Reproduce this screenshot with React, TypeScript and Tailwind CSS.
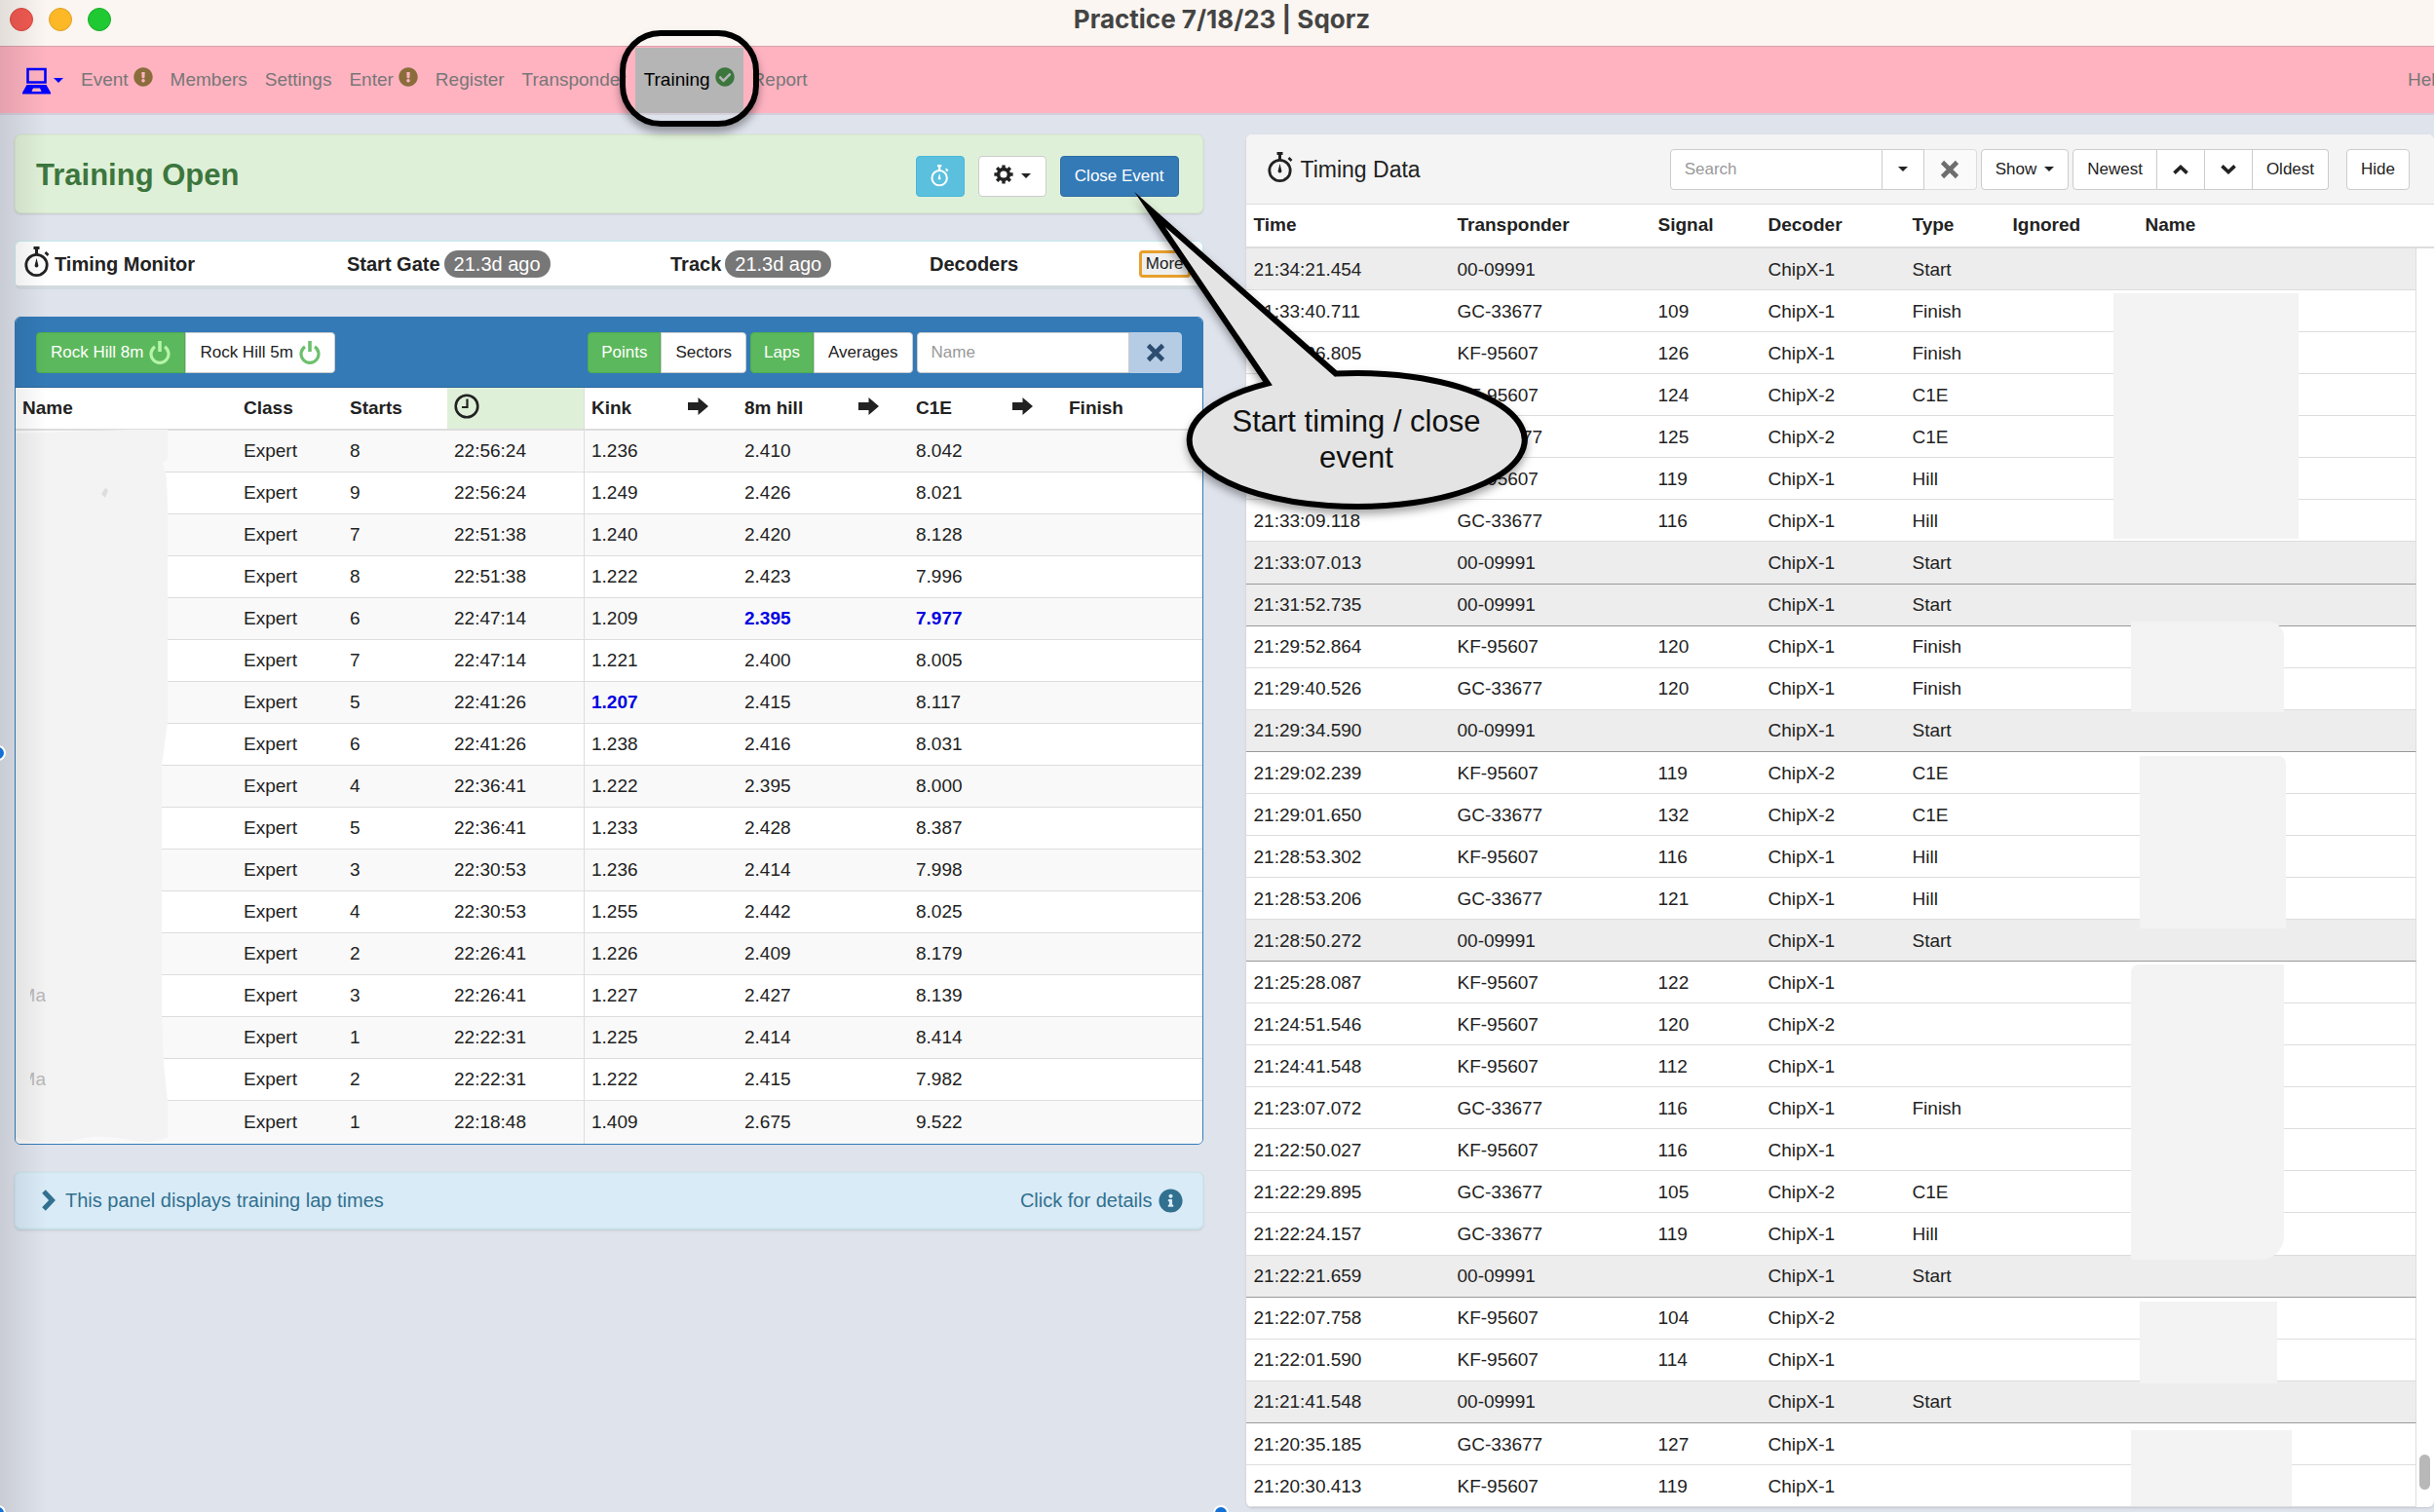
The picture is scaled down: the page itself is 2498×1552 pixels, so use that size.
import { ReactNode, useState } from "react";
import { FaCheckCircle, FaExclamationCircle, FaInfoCircle } from "react-icons/fa";
import clsx from "clsx";

interface Lap {
    name?: string;
    starts: number;
    clock: string;
    kink: string;
    hill: string;
    c1e: string;
    best?: string[];
}

const laps: Lap[] = [
    { starts: 8, clock: "22:56:24", kink: "1.236", hill: "2.410", c1e: "8.042" },
    { starts: 9, clock: "22:56:24", kink: "1.249", hill: "2.426", c1e: "8.021" },
    { starts: 7, clock: "22:51:38", kink: "1.240", hill: "2.420", c1e: "8.128" },
    { starts: 8, clock: "22:51:38", kink: "1.222", hill: "2.423", c1e: "7.996" },
    { starts: 6, clock: "22:47:14", kink: "1.209", hill: "2.395", c1e: "7.977", best: ["hill", "c1e"] },
    { starts: 7, clock: "22:47:14", kink: "1.221", hill: "2.400", c1e: "8.005" },
    { starts: 5, clock: "22:41:26", kink: "1.207", hill: "2.415", c1e: "8.117", best: ["kink"] },
    { starts: 6, clock: "22:41:26", kink: "1.238", hill: "2.416", c1e: "8.031" },
    { starts: 4, clock: "22:36:41", kink: "1.222", hill: "2.395", c1e: "8.000" },
    { starts: 5, clock: "22:36:41", kink: "1.233", hill: "2.428", c1e: "8.387" },
    { starts: 3, clock: "22:30:53", kink: "1.236", hill: "2.414", c1e: "7.998" },
    { starts: 4, clock: "22:30:53", kink: "1.255", hill: "2.442", c1e: "8.025" },
    { starts: 2, clock: "22:26:41", kink: "1.226", hill: "2.409", c1e: "8.179" },
    { name: "Ma", starts: 3, clock: "22:26:41", kink: "1.227", hill: "2.427", c1e: "8.139" },
    { starts: 1, clock: "22:22:31", kink: "1.225", hill: "2.414", c1e: "8.414" },
    { name: "Ma", starts: 2, clock: "22:22:31", kink: "1.222", hill: "2.415", c1e: "7.982" },
    { starts: 1, clock: "22:18:48", kink: "1.409", hill: "2.675", c1e: "9.522" },
];

// time, transponder, signal, decoder, type
const hits = [
    ["21:34:21.454", "00-09991", "", "ChipX-1", "Start"],
    ["21:33:40.711", "GC-33677", "109", "ChipX-1", "Finish"],
    ["21:33:36.805", "KF-95607", "126", "ChipX-1", "Finish"],
    ["21:33:19.412", "KF-95607", "124", "ChipX-2", "C1E"],
    ["21:33:18.377", "GC-33677", "125", "ChipX-2", "C1E"],
    ["21:33:10.204", "KF-95607", "119", "ChipX-1", "Hill"],
    ["21:33:09.118", "GC-33677", "116", "ChipX-1", "Hill"],
    ["21:33:07.013", "00-09991", "", "ChipX-1", "Start"],
    ["21:31:52.735", "00-09991", "", "ChipX-1", "Start"],
    ["21:29:52.864", "KF-95607", "120", "ChipX-1", "Finish"],
    ["21:29:40.526", "GC-33677", "120", "ChipX-1", "Finish"],
    ["21:29:34.590", "00-09991", "", "ChipX-1", "Start"],
    ["21:29:02.239", "KF-95607", "119", "ChipX-2", "C1E"],
    ["21:29:01.650", "GC-33677", "132", "ChipX-2", "C1E"],
    ["21:28:53.302", "KF-95607", "116", "ChipX-1", "Hill"],
    ["21:28:53.206", "GC-33677", "121", "ChipX-1", "Hill"],
    ["21:28:50.272", "00-09991", "", "ChipX-1", "Start"],
    ["21:25:28.087", "KF-95607", "122", "ChipX-1", ""],
    ["21:24:51.546", "KF-95607", "120", "ChipX-2", ""],
    ["21:24:41.548", "KF-95607", "112", "ChipX-1", ""],
    ["21:23:07.072", "GC-33677", "116", "ChipX-1", "Finish"],
    ["21:22:50.027", "KF-95607", "116", "ChipX-1", ""],
    ["21:22:29.895", "GC-33677", "105", "ChipX-2", "C1E"],
    ["21:22:24.157", "GC-33677", "119", "ChipX-1", "Hill"],
    ["21:22:21.659", "00-09991", "", "ChipX-1", "Start"],
    ["21:22:07.758", "KF-95607", "104", "ChipX-2", ""],
    ["21:22:01.590", "KF-95607", "114", "ChipX-1", ""],
    ["21:21:41.548", "00-09991", "", "ChipX-1", "Start"],
    ["21:20:35.185", "GC-33677", "127", "ChipX-1", ""],
    ["21:20:30.413", "KF-95607", "119", "ChipX-1", ""],
];

function Stopwatch({ className }: { className?: string }) {
    return (
        <svg viewBox="0 0 26 32" className={className} fill="none" stroke="currentColor" aria-hidden="true">
            <circle cx="12.5" cy="19" r="10.7" strokeWidth="2.8" />
            <path d="M9.5 1.6h6M12.5 2v6" strokeWidth="3" />
            <path d="M21.5 6l3 3" strokeWidth="2.6" />
            <path d="M12.5 12l1.8 7a1.9 1.9 0 1 1-3.6 0z" fill="currentColor" stroke="none" />
        </svg>
    );
}

function Power({ className }: { className?: string }) {
    return (
        <svg viewBox="0 0 22 26" className={className} fill="none" stroke="currentColor" aria-hidden="true">
            <path d="M6 6.8a9 9 0 1 0 10 0" strokeWidth="3.2" />
            <path d="M11 1v11" strokeWidth="3.6" />
        </svg>
    );
}

function Gear({ className }: { className?: string }) {
    return (
        <svg viewBox="0 0 20 20" className={className} fill="none" stroke="currentColor" aria-hidden="true">
            <circle cx="10" cy="10" r="5.4" strokeWidth="3.6" />
            <path
                d="M10 .4v3.4M10 16.2v3.4M.4 10h3.4M16.2 10h3.4M3.2 3.2l2.5 2.5M14.3 14.3l2.5 2.5M3.2 16.8l2.5-2.5M14.3 5.7l2.5-2.5"
                strokeWidth="3.4"
            />
        </svg>
    );
}

function Cross({ className }: { className?: string }) {
    return (
        <svg viewBox="0 0 20 20" className={className} fill="none" stroke="currentColor" aria-hidden="true">
            <path d="M2.5 2.5l15 15M17.5 2.5l-15 15" strokeWidth="4.6" />
        </svg>
    );
}

function Chevron({ className }: { className?: string }) {
    return (
        <svg viewBox="0 0 16 22" className={className} fill="none" stroke="currentColor" aria-hidden="true">
            <path d="M3 2l8.5 9L3 20" strokeWidth="5" />
        </svg>
    );
}

function Arrow() {
    return (
        <svg viewBox="0 0 21 18" className="mb-1 h-[18px] w-[21px]" fill="currentColor" aria-label="to">
            <path d="M0 5h10.500V0L21 9l-10.500 9v-5H0z" />
        </svg>
    );
}

function Clock() {
    return (
        <svg viewBox="0 0 26 26" className="mb-1 h-[26px] w-[26px]" fill="none" stroke="currentColor" aria-label="Clock">
            <circle cx="13" cy="13" r="11.300" strokeWidth="2.600" />
            <path d="M13.500 5.500v8.500H8" strokeWidth="2.200" />
        </svg>
    );
}

function Laptop() {
    return (
        <svg viewBox="0 0 29 28" className="h-7 w-[29px]" aria-hidden="true">
            <path d="M5.500 2h18v13.500h-18z" fill="none" stroke="#00f" strokeWidth="2.600" />
            <path fillRule="evenodd" d="M4.500 18h20L29 26v1.500H0V26zM11 21.500l-1.500 3.500h10L18 21.500z" fill="#00f" />
        </svg>
    );
}

function Caret() {
    return <span className="inline-block border-x-[5px] border-t-[5px] border-x-transparent border-t-current" />;
}

interface BtnProps {
    children: ReactNode;
    className?: string;
    label?: string;
    onClick?: () => void;
}

function Btn({ children, className, label, onClick }: BtnProps) {
    return (
        <button
            type="button"
            aria-label={label}
            onClick={onClick}
            className={clsx("flex h-[42px] items-center justify-center border text-[17px] whitespace-nowrap", className)}
        >
            {children}
        </button>
    );
}

const navItem = "flex h-full items-center px-[9px] text-[#777]";
const navIcon = "mb-2 ml-[5px] text-[20px]";

function Nav() {
    return (
        <nav className="flex h-[71px] items-center border-t border-b-2 border-t-[#d9a0ac] border-b-[#d5cfdc] bg-[#ffb3c1] pt-px pl-[23px] text-[19px]">
            <button type="button" aria-label="Menu" className="mr-[9px] flex items-center gap-[3px] text-[#00f]">
                <Laptop />
                <Caret />
            </button>
            <a href="#event" className={navItem}>
                Event <FaExclamationCircle className={clsx(navIcon, "text-[#8a6d3b]")} />
            </a>
            <a href="#members" className={navItem}>Members</a>
            <a href="#settings" className={navItem}>Settings</a>
            <a href="#enter" className={navItem}>
                Enter <FaExclamationCircle className={clsx(navIcon, "text-[#8a6d3b]")} />
            </a>
            <a href="#register" className={navItem}>Register</a>
            <a href="#transponder" className={navItem}>Transponder</a>
            <a href="#training" className="relative flex h-full items-center bg-[#b5b5b5] px-[9px] text-black">
                Training <FaCheckCircle className={clsx(navIcon, "text-[#3c763d]")} />
                {/* marker around the active tab */}
                <span className="absolute -inset-x-4 -top-[18px] -bottom-[14px] z-20 rounded-[42px] border-[6px] border-black shadow-[0_6px_8px_rgba(0,0,0,0.35)]" />
            </a>
            <a href="#report" className={navItem}>Report</a>
            <a href="#help" className="-mr-3 ml-auto text-[#777]">Help</a>
        </nav>
    );
}

function TrainingHeader() {
    return (
        <div className="flex h-[81px] items-center rounded-md border border-[#d6e9c6] bg-[#dff0d8] pt-1 pr-6 pl-[21px] shadow-sm">
            <h1 className="text-[31px] font-bold text-[#3c763d]">Training Open</h1>
            <div className="ml-auto flex gap-[14px]">
                <Btn label="Timing" className="w-[50px] rounded border-[#46b8da] bg-[#5bc0de] text-white">
                    <Stopwatch className="h-[23px] w-[19px]" />
                </Btn>
                <Btn label="Options" className="w-[70px] gap-2 rounded border-[#ccc] bg-white text-[#222]">
                    <Gear className="mb-1 h-5 w-5" />
                    <Caret />
                </Btn>
                <Btn className="rounded border-[#2e6da4] bg-[#337ab7] px-[14px] text-white">Close Event</Btn>
            </div>
        </div>
    );
}

const pill = "rounded-full bg-[#777] px-[10px] font-normal leading-7 text-white";

function TimingMonitor() {
    return (
        <div className="mt-7 flex h-[50px] items-center rounded-md border border-b-4 border-[#c5e9ee] border-b-[#d3dbe0] bg-white pl-[9px] pr-3 text-[20px] font-bold">
            <div className="flex w-[331px] items-center gap-[5px]">
                <Stopwatch className="mb-1 h-8 w-[26px]" />
                Timing Monitor
            </div>
            <div className="flex w-[332px] items-center gap-1">
                Start Gate <span className={pill}>21.3d ago</span>
            </div>
            <div className="flex w-[266px] items-center gap-1">
                Track <span className={pill}>21.3d ago</span>
            </div>
            <div>Decoders</div>
            <button type="button" className="ml-auto h-7 rounded border-[3px] border-[#e8a02c] bg-[#efefef] px-1 text-[17px] leading-5 font-normal">
                More
            </button>
        </div>
    );
}

const on = "border-[#4cae4c] bg-[#5cb85c] text-white";
const off = "border-[#ccc] bg-white text-[#222]";

function LapsPanel() {
    const [track, setTrack] = useState("8m");
    const [mode, setMode] = useState("points");
    const [view, setView] = useState("laps");

    return (
        <section className="relative mt-7 overflow-hidden rounded-md border border-[#337ab7] bg-white">
            <div className="flex h-[72px] items-center border-b border-[#2a6597] bg-[#337ab7] px-[21px]">
                <Btn onClick={() => setTrack("8m")} className={clsx("gap-[6px] rounded-l px-[14px]", track === "8m" ? on : off)}>
                    Rock Hill 8m <Power className="h-[26px] w-[22px] text-[#b5f5a8]" />
                </Btn>
                <Btn onClick={() => setTrack("5m")} className={clsx("gap-[6px] rounded-r px-[14px]", track === "5m" ? on : off)}>
                    Rock Hill 5m <Power className="h-[26px] w-[22px] text-[#6cc06c]" />
                </Btn>
                <div className="ml-auto flex gap-1">
                    <div className="flex">
                        <Btn onClick={() => setMode("points")} className={clsx("rounded-l px-[13px]", mode === "points" ? on : off)}>Points</Btn>
                        <Btn onClick={() => setMode("sectors")} className={clsx("rounded-r px-[14px]", mode === "sectors" ? on : off)}>Sectors</Btn>
                    </div>
                    <div className="flex">
                        <Btn onClick={() => setView("laps")} className={clsx("rounded-l px-[13px]", view === "laps" ? on : off)}>Laps</Btn>
                        <Btn onClick={() => setView("averages")} className={clsx("rounded-r px-[14px]", view === "averages" ? on : off)}>Averages</Btn>
                    </div>
                    <div className="flex">
                        <input
                            type="text"
                            aria-label="Name"
                            placeholder="Name"
                            className="h-[42px] w-[218px] rounded-l border border-[#ccc] bg-white px-[14px] text-[17px] placeholder:text-[#999]"
                        />
                        <Btn label="Clear name" className="w-[54px] rounded-r border-[#b5cce4] bg-[#b5cce4] text-[#2c4d70]">
                            <Cross className="h-5 w-5" />
                        </Btn>
                    </div>
                </div>
            </div>
            <table className="w-full table-fixed border-separate border-spacing-0 text-left text-[19px]">
                <colgroup>
                    <col className="w-[227px]" />
                    <col className="w-[109px]" />
                    <col className="w-[107px]" />
                    <col className="w-[141px]" />
                    <col className="w-[99px]" />
                    <col className="w-[58px]" />
                    <col className="w-[117px]" />
                    <col className="w-[59px]" />
                    <col className="w-[99px]" />
                    <col className="w-[58px]" />
                    <col />
                </colgroup>
                <thead>
                    <tr className="h-11 [&>th]:border-b-2 [&>th]:border-[#ddd] [&>th]:px-[7px]">
                        <th>Name</th>
                        <th>Class</th>
                        <th>Starts</th>
                        <th className="border-r bg-[#dff0d8]"><Clock /></th>
                        <th>Kink</th>
                        <th><Arrow /></th>
                        <th>8m hill</th>
                        <th><Arrow /></th>
                        <th>C1E</th>
                        <th><Arrow /></th>
                        <th>Finish</th>
                    </tr>
                </thead>
                <tbody>
                    {laps.map((lap, i) => (
                        <tr
                            key={i}
                            className="h-[43px] odd:bg-[#f9f9f9] last:h-11 [&>td]:border-[#ddd] [&>td]:border-b [&>td]:px-[7px] [&>td]:pt-px [&:last-child>td]:border-b-0"
                        >
                            <td>
                                {lap.name && (
                                    <span className="relative z-10 ml-2 flex w-4 justify-end overflow-hidden text-[#b8b8b8]">{lap.name}</span>
                                )}
                            </td>
                            <td>Expert</td>
                            <td>{lap.starts}</td>
                            <td className="border-r">{lap.clock}</td>
                            <td className={clsx(lap.best?.includes("kink") && "font-bold text-[#0000e0]")}>{lap.kink}</td>
                            <td></td>
                            <td className={clsx(lap.best?.includes("hill") && "font-bold text-[#0000e0]")}>{lap.hill}</td>
                            <td></td>
                            <td className={clsx(lap.best?.includes("c1e") && "font-bold text-[#0000e0]")}>{lap.c1e}</td>
                            <td></td>
                            <td></td>
                        </tr>
                    ))}
                </tbody>
            </table>
            {/* rider names are blanked out */}
            <svg viewBox="0 0 157 733" className="absolute bottom-0 left-0 h-[733px] w-[157px]" aria-hidden="true">
                <path
                    d="M0 4L115 0H156V30L151 34L155 50L156 80V300L152 330L150 345V600L152 650L156 690V726Q140 735 110 728Q80 722 60 730Q20 735 0 726z"
                    fill="#f3f3f3"
                />
                <path d="M88 66l4-6 3 2-3 8z" fill="#ddd" />
            </svg>
        </section>
    );
}

function InfoBar() {
    return (
        <a
            href="#details"
            className="mt-7 flex h-[59px] items-center rounded-md border border-b-2 border-[#c9e6ef] bg-[#d9ebf7] pr-5 pl-[26px] text-[20px] text-[#31708f] shadow-sm"
        >
            <Chevron className="mr-[9px] h-[22px] w-4" />
            This panel displays training lap times
            <span className="ml-auto">Click for details</span>
            <FaInfoCircle className="ml-[6px] text-[25px]" />
        </a>
    );
}

const blank = "absolute bg-[#f3f3f3]";

function TimingData() {
    return (
        <section className="flex min-w-0 flex-1 basis-0 flex-col overflow-hidden rounded-md bg-white shadow">
            <div className="flex h-[72px] items-center border-b border-[#ddd] bg-[#f4f4f4] pr-[25px] pl-[21px]">
                <Stopwatch className="mb-1 h-8 w-[28px]" />
                <h2 className="mt-[2px] ml-[7px] text-[23px]">Timing Data</h2>
                <div className="ml-auto flex">
                    <input
                        type="text"
                        aria-label="Search"
                        placeholder="Search"
                        className="h-[42px] w-[218px] rounded-l border border-[#ccc] bg-white px-[14px] text-[17px] placeholder:text-[#999]"
                    />
                    <Btn label="Search options" className="w-[43px] border-l-0 border-[#ccc] bg-white"><Caret /></Btn>
                    <Btn label="Clear search" className="w-[54px] rounded-r border-l-0 border-[#ddd] bg-[#fafafa] text-[#6e6e6e]">
                        <Cross className="h-5 w-5" />
                    </Btn>
                </div>
                <Btn className="ml-1 gap-2 rounded border-[#ccc] bg-white px-[14px]">Show <Caret /></Btn>
                <div className="ml-1 flex">
                    <Btn className="rounded-l border-[#ccc] bg-white px-[14px]">Newest</Btn>
                    <Btn label="Up" className="w-[49px] border-l-0 border-[#ccc] bg-white">
                        <Chevron className="h-4 w-4 -rotate-90" />
                    </Btn>
                    <Btn label="Down" className="w-[49px] border-l-0 border-[#ccc] bg-white">
                        <Chevron className="h-4 w-4 rotate-90" />
                    </Btn>
                    <Btn className="rounded-r border-l-0 border-[#ccc] bg-white px-[14px]">Oldest</Btn>
                </div>
                <Btn className="ml-[18px] rounded border-[#ccc] bg-white px-[14px]">Hide</Btn>
            </div>
            <div className="flex min-h-0 flex-1">
                <div className="relative h-full flex-1">
                    <table className="h-full w-full table-fixed border-separate border-spacing-0 text-left text-[19px]">
                        <colgroup>
                            <col className="w-[209px]" />
                            <col className="w-[206px]" />
                            <col className="w-[113px]" />
                            <col className="w-[148px]" />
                            <col className="w-[103px]" />
                            <col className="w-[136px]" />
                            <col />
                        </colgroup>
                        <thead>
                            <tr className="h-[45px] [&>th]:border-b-2 [&>th]:border-[#ddd] [&>th]:px-2">
                                <th>Time</th>
                                <th>Transponder</th>
                                <th>Signal</th>
                                <th>Decoder</th>
                                <th>Type</th>
                                <th>Ignored</th>
                                <th>Name</th>
                            </tr>
                        </thead>
                        <tbody>
                            {hits.map((hit, i) => (
                                <tr
                                    key={hit[0]}
                                    className={clsx(
                                        "h-[43px] [&>td]:border-b [&>td]:px-2 [&>td]:pt-[2px] [&>td:last-child]:border-r [&>td:last-child]:border-r-[#ddd]",
                                        hit[4] === "Start" && "bg-[#ededed]",
                                        hit[4] === "Start" && i > 0 ? "[&>td]:border-b-[#999]" : "[&>td]:border-b-[#ddd]"
                                    )}
                                >
                                    {hit.map((value, col) => (
                                        <td key={col}>{value}</td>
                                    ))}
                                    <td></td>
                                    <td></td>
                                </tr>
                            ))}
                        </tbody>
                    </table>
                    {/* blanked out names */}
                    <div className={clsx(blank, "top-[91px] left-[890px] h-[252px] w-[190px]")} />
                    <div className={clsx(blank, "top-[428px] left-[908px] h-[93px] w-[157px] rounded-tr-2xl")} />
                    <div className={clsx(blank, "top-[566px] left-[917px] h-[177px] w-[150px] rounded-tr-lg")} />
                    <div className={clsx(blank, "top-[780px] left-[908px] h-[303px] w-[157px] rounded-tl-lg rounded-br-3xl")} />
                    <div className={clsx(blank, "top-[1126px] left-[917px] h-[84px] w-[141px]")} />
                    <div className={clsx(blank, "top-[1258px] left-[908px] h-[78px] w-[165px]")} />
                </div>
                <div className="flex w-[18px] flex-col">
                    <div className="h-[45px] border-b-2 border-[#ddd]" />
                    <div className="flex flex-1 items-end pb-[18px] pl-[3px]">
                        <div className="h-9 w-[11px] rounded-full bg-[#b8b8b8]" />
                    </div>
                </div>
            </div>
        </section>
    );
}

function Callout() {
    return (
        <div className="pointer-events-none absolute top-[190px] left-[1160px] z-30 h-[350px] w-[420px]">
            <svg viewBox="1160 190 420 350" className="h-full w-full drop-shadow-[0_5px_4px_rgba(0,0,0,0.35)]" aria-hidden="true">
                <path
                    d="M1180 215L1301 393.6A172 68.500 0 1 0 1371 383.6z"
                    fill="#e4e4e4"
                    stroke="#000"
                    strokeWidth="6"
                    strokeMiterlimit="20"
                />
            </svg>
            <p className="absolute top-[224px] left-[73px] w-[318px] text-center text-[31px] leading-[37px] text-[#111]">
                Start timing / close
                <br />
                event
            </p>
        </div>
    );
}

const handle = "absolute z-40 h-4 w-4 rounded-full border-2 border-white bg-[#1470d4]";

export default function App() {
    return (
        <div className="relative flex h-screen flex-col overflow-hidden bg-[#dfe3ec] font-['Liberation_Sans',Arial,sans-serif] text-[#222]">
            <header className="flex h-[47px] items-center bg-[#fbf6f1] pb-2 pl-[10px]">
                <div className="flex flex-1 gap-4">
                    <span className="h-6 w-6 rounded-full border border-[#d9483f] bg-[#f25a52]" />
                    <span className="h-6 w-6 rounded-full border border-[#dfa023] bg-[#fcb827]" />
                    <span className="h-6 w-6 rounded-full border border-[#1aab29] bg-[#1fc932]" />
                </div>
                <div className="font-['Inter',sans-serif] text-[26px] font-bold text-[#444]">Practice 7/18/23 | Sqorz</div>
                <div className="flex-1" />
            </header>
            <Nav />
            <main className="flex min-h-0 flex-1 gap-11 pt-5 pb-[5px] pl-[15px]">
                <div className="min-w-0 flex-1 basis-0">
                    <TrainingHeader />
                    <TimingMonitor />
                    <LapsPanel />
                    <InfoBar />
                </div>
                <TimingData />
            </main>
            <Callout />
            <div className="pointer-events-none absolute inset-y-0 left-0 z-30 w-12 bg-linear-to-r from-black/10 to-transparent" />
            <span className={clsx(handle, "top-[765px] -left-[10px]")} />
            <span className={clsx(handle, "-bottom-[9px] -left-[10px]")} />
            <span className={clsx(handle, "-bottom-[9px] left-1/2 ml-[-4px]")} />
        </div>
    );
}
